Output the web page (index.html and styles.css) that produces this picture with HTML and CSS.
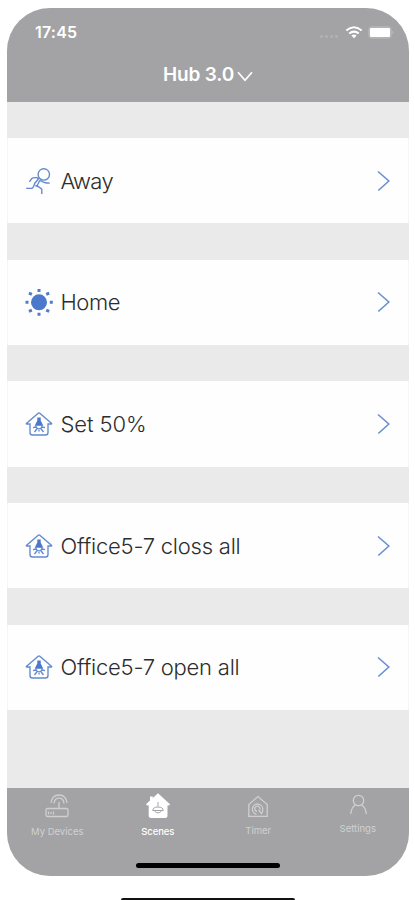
FILE: index.html
```html
<!DOCTYPE html>
<html lang="en">
<head>
<meta charset="utf-8">
<title>Hub 3.0</title>
<link rel="stylesheet" href="styles.css">
</head>
<body>
<svg class="defs" aria-hidden="true">
  <symbol id="chevron" viewBox="0 0 14 22"><path d="M1 1.5 11.8 11 1.3 20.5"/></symbol>
  <symbol id="lamp-home" viewBox="0 0 28 26">
    <path d="M5 13H1.8Q.8 13 1.6 12.2L13.2 2.3Q14 1.6 14.8 2.3L26.4 12.2Q27.2 13 26.2 13H23V21.5Q23 24 20.5 24H7.5Q5 24 5 21.5Z"/>
    <path class="solid" d="M12.3 6.5h3.4V9.5l2.6 5.2H9.7L12.3 9.5Z"/>
    <path d="M11 14.5Q11 17.8 14 17.8T17 14.5M10.8 16l-2.8.7M17.2 16l2.8.7M11.8 18l-2.3 3M16.2 18l2.3 3M14 19v1.6"/>
  </symbol>
</svg>
<div class="phone">
  <header class="header">
    <div class="status">
      <span class="time">17:45</span>
      <span class="dots">
        <i></i><i></i><i></i><i></i>
      </span>
      <svg class="wifi" width="18" height="13" viewBox="0 0 18 13"><path d="M1.3 4.6Q9-2 16.7 4.6M4.2 7.6q4.8-4 9.6 0"/><path class="fill" d="m9 12.2-2.6-2.8q2.6-1.9 5.2 0Z"/></svg>
      <svg class="battery" width="27" height="13" viewBox="0 0 27 13"><rect class="shell" x=".7" y=".7" width="22.6" height="11.6" rx="3"/><rect class="charge" x="2" y="2" width="20" height="9" rx="1"/><path class="tip" d="M24.5 4.5q2 2 0 4Z"/></svg>
    </div>
    <h1 class="title">Hub 3.0<svg width="16" height="11" viewBox="0 0 16 11"><path d="M1 1.2 8 9.3 15 1.2"/></svg></h1>
  </header>
  <main class="scenes">
    <div class="row">
      <svg class="icon" viewBox="0 0 28 28"><circle cx="18.8" cy="7.4" r="5.7"/><path d="M4.4 14.8 6.8 11.5Q8.5 10.2 12 10.7L14.2 12.2M13.6 11.8 9.8 16.2Q8.3 21 6.7 21.4H1.2M15.3 13.2Q18 16 24.8 16.2M10.3 18.5Q14 19.3 16.8 22.2V27M14.8 13.2 12.2 18.8"/></svg>
      <span class="name away">Away</span>
      <svg class="chevron"><use href="#chevron"/></svg>
    </div>
    <div class="row">
      <svg class="icon sun" viewBox="0 0 28 28"><circle class="solid" cx="14" cy="14.3" r="8"/><path d="M14 1v3M14 24.8v3M.5 14.3h3M24.8 14.3h3M3.9 5.2l3 1.2M21.2 6.4l3-1.2M3.9 23.4l3-1.2M21.2 22.2l3 1.2"/></svg>
      <span class="name home">Home</span>
      <svg class="chevron"><use href="#chevron"/></svg>
    </div>
    <div class="row">
      <svg class="icon lamp"><use href="#lamp-home"/></svg>
      <span class="name set">Set 50%</span>
      <svg class="chevron"><use href="#chevron"/></svg>
    </div>
    <div class="row">
      <svg class="icon lamp"><use href="#lamp-home"/></svg>
      <span class="name">Office5-7 closs all</span>
      <svg class="chevron"><use href="#chevron"/></svg>
    </div>
    <div class="row">
      <svg class="icon lamp"><use href="#lamp-home"/></svg>
      <span class="name">Office5-7 open all</span>
      <svg class="chevron"><use href="#chevron"/></svg>
    </div>
  </main>
  <footer class="footer">
    <nav class="tabs">
      <a class="tab">
        <svg viewBox="0 0 28 28"><rect x="3" y="16.5" width="22" height="8" rx="1.5"/><path d="M16 16V10M8 11Q9 3 16 3T24 11M11 11.5Q11.5 6.2 16 6.2T21 11.5M5.5 22.5v-3M8 22v-2M10.5 22.5v-3"/></svg>
        <span>My Devices</span>
      </a>
      <a class="tab active">
        <svg viewBox="0 0 28 28"><path class="house" d="M14 1.3 26 12.3Q26 13.5 23.5 13.5V23.5Q23.5 26 21 26H7.2Q4.7 26 4.7 23.5V13.5Q2 13.5 2 12.3L6 8.6V4.5H8.8V6Z"/><path class="lampline" d="M14 10v4.5M8.7 18.5Q9 15 14 15T19.3 18.5ZM10.5 19Q14 22.7 17.5 19"/></svg>
        <span>Scenes</span>
      </a>
      <a class="tab timer">
        <svg viewBox="0 0 28 28"><path d="M4.8 24.3V12.5L14 4.5 23.2 12.5V24.3ZM12.5 22.3A5.2 5.2 0 1 1 18.8 17.5Q18.8 20 17.5 21.3M13 19.3A2.6 2.6 0 1 1 15.8 17.5M14.5 18l3.7 4.2"/></svg>
        <span>Timer</span>
      </a>
      <a class="tab settings">
        <svg viewBox="0 0 28 28"><circle cx="13.5" cy="8.5" r="5.2"/><path d="M5.8 22Q6.3 15.5 10.3 13M16.6 13Q20.8 15.5 21.3 22"/></svg>
        <span>Settings</span>
      </a>
    </nav>
    <div class="indicator"></div>
  </footer>
</div>
<div class="bottom-line"></div>
</body>
</html>
```

FILE: styles.css
```css
* { box-sizing: border-box; }
body {
  margin: 0;
  height: 900px;
  padding: 8px 6px 0 7px;
  overflow: hidden;
  background: #fff;
  font-family: Inter, "Liberation Sans", sans-serif;
  display: flex;
  flex-direction: column;
}
svg { display: block; fill: none; flex: none; }
.defs { position: absolute; width: 0; height: 0; }
.phone {
  height: 868px;
  flex: none;
  border-radius: 43px;
  overflow: hidden;
  background: #eaeaea;
  display: flex;
  flex-direction: column;
}
.header { height: 94px; background: #a3a3a5; color: #fff; flex: none; }
.status { display: flex; align-items: center; height: 48px; padding: 0 14px 0 28px; }
.time { font-size: 16px; font-weight: 600; letter-spacing: .2px; }
.dots { display: flex; gap: 2px; margin: 8px 7px 0 auto; }
.dots i { width: 3px; height: 3px; border-radius: 1px; background: #b0b0b2; }
.wifi { stroke: #fff; stroke-width: 2; margin-right: 5px; }
.wifi .fill { fill: #fff; stroke: none; }
.shell { fill: #b5b5b7; stroke: #b5b5b7; }
.charge { fill: #fff; }
.tip { fill: #bcbcbe; }
.title {
  margin: 0;
  height: 36px;
  display: flex;
  align-items: center;
  justify-content: center;
  gap: 3px;
  font-size: 19px;
  font-weight: 600;
  letter-spacing: -.15px;
}
.title svg { stroke: #fff; stroke-width: 1.7; margin-top: 4px; }
.scenes { height: 686px; padding-top: 36.2px; display: flex; flex-direction: column; gap: 36.3px; flex: none; }
.row {
  height: 85.3px;
  flex: none;
  display: flex;
  align-items: center;
  background: #fefefe;
  border: solid #f5f5f5;
  border-width: 0 1px;
  padding: 0 17px;
}
.icon { width: 28px; height: 28px; stroke: #6289d0; stroke-width: 1.35; }
.icon.sun { stroke-width: 3; stroke: #527bc9; }
.lamp { height: 26px; }
.solid { fill: #4c78cc; stroke: none; }
.name { margin-left: 7.5px; color: #2d2d2d; font-size: 22px; font-weight: 300; letter-spacing: -.22px; white-space: nowrap; }
.away { letter-spacing: -.7px; }
.home { letter-spacing: -.45px; }
.set { letter-spacing: -.1px; }
.chevron { width: 14px; height: 22px; margin-left: auto; stroke: #6b90d2; stroke-width: 1.6; }
.footer { height: 88px; background: #a3a3a5; flex: none; }
.tabs { display: grid; grid-template-columns: repeat(4, 1fr); height: 75px; }
.tab { display: flex; flex-direction: column; align-items: center; padding-top: 4px; color: #d0d0d2; font-size: 9.5px; line-height: 12px; }
.tab svg { width: 28px; height: 28px; stroke: #cfcfd1; stroke-width: 1.3; }
.tab span { margin-top: 6px; }
.active { color: #fff; font-weight: 500; }
.active span { letter-spacing: -.1px; }
.tab .house { fill: #fff; stroke: none; }
.tab .lampline { stroke: #a3a3a5; stroke-width: 1; }
.timer span { margin-top: 5px; }
.settings span { margin: 3px 2px 0 0; }
.indicator { width: 144px; height: 5px; margin: 0 auto; border-radius: 3px; background: #000; }
.bottom-line { width: 174px; height: 2px; margin: 22px 0 0 114px; border-radius: 2px 2px 0 0; background: #111; flex: none; }
```
